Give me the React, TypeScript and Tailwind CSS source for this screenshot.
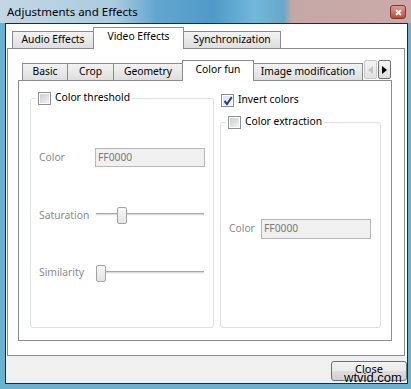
import React from 'react';

const CheckBox = ({ checked }: { checked?: boolean }) => (
  <span className="relative flex h-[13px] w-[13px] shrink-0 items-center justify-center border border-[#8e8f8f] bg-white">
    <span
      className={
        checked
          ? 'h-[9px] w-[9px] bg-gradient-to-br from-[#d4e4f4] to-[#f6f9fc]'
          : 'h-[9px] w-[9px] bg-gradient-to-br from-[#c9cdd2] to-[#f4f4f4]'
      }
    />
    {checked && (
      <svg className="absolute left-[1px] top-[1px]" width="10" height="10" viewBox="0 0 10 10">
        <path d="M1.5 5 L4 8 L8.8 1.2" fill="none" stroke="#263f8f" strokeWidth="2" />
      </svg>
    )}
  </span>
);

const Tab = ({ label, w, selected, small }: { label: string; w: string; selected?: boolean; small?: boolean }) => (
  <div
    className={
      selected
        ? `relative z-10 -ml-px mb-[-1px] flex items-center justify-center border border-b-0 border-[#898c95] bg-white ${small ? 'h-[21px]' : 'h-[22px]'} ${w}`
        : `-ml-px flex h-[17px] items-center justify-center border border-b-0 border-[#898c95] bg-gradient-to-b from-[#f3f3f3] to-[#dedede] ${w}`
    }
  >
    <span className={selected ? 'pb-[3px]' : ''}>{label}</span>
  </div>
);

const TextBox = ({ h }: { h: string }) => (
  <div className={`flex w-[110px] items-center border border-[#b8b8b8] bg-[#f0f0f0] pl-[2px] text-[#7a7a7a] ${h}`}>
    FF0000
  </div>
);

const Slider = ({ pos }: { pos: number }) => (
  <div className="relative h-[17px] w-[108px]">
    <div className="absolute left-0 right-0 top-[6px] h-[3px] border-t border-[#a8a8a8] border-b border-b-[#f4f4f4] bg-[#dcdcdc]" />
    <div
      className="absolute top-0 h-[17px] w-[10px] rounded-[2px] border border-[#a3a3a3] bg-gradient-to-b from-[#f7f7f7] to-[#e3e3e3]"
      style={{ left: pos }}
    />
  </div>
);

export default function App() {
  return (
    <div className="flex h-[389px] w-[411px] flex-col overflow-hidden bg-[#6ab2cf] font-['Noto_Sans',sans-serif] text-[10.3px] text-black">
      {/* title bar */}
      <div className="flex h-[23px] shrink-0 items-center bg-[linear-gradient(90deg,#c3d7e3_0%,#aacbdf_28%,#62a6d0_38%,#4f9ac8_52%,#72b8db_62%,#68a7c8_69%,#c5a7a6_71%,#caabaa_100%)] pl-[7px] pr-[5px]">
        <span className="text-[11.5px] leading-none">Adjustments and Effects</span>
        <div className="ml-auto mt-[1px] flex h-[14px] w-[16px] items-center justify-center rounded-[3px] border border-[#7a3a34] bg-gradient-to-b from-[#e39a8e] to-[#c2463a]">
          <svg width="7" height="7" viewBox="0 0 7 7">
            <path d="M1 1 L6 6 M6 1 L1 6" stroke="white" strokeWidth="1.8" />
          </svg>
        </div>
      </div>

      {/* window body */}
      <div className="ml-[5px] flex h-[361px] w-[403px] flex-col border border-[#1f2c35] bg-[#f0f0f0]">
        <div className="flex h-[332px] flex-col bg-white">
          {/* outer tabs */}
          <div className="flex h-[24px] items-end pl-[7px]">
            <Tab label="Audio Effects" w="w-[82px]" />
            <Tab label="Video Effects" w="w-[91px]" selected />
            <Tab label="Synchronization" w="w-[98px]" />
          </div>
          <div className="ml-px mr-[2px] flex h-[308px] flex-col border border-[#898c95] bg-white">
            <div className="ml-[10px] flex w-[374px] flex-col">
              {/* inner tabs */}
              <div className="flex h-[31px] items-end pl-[5px]">
                <Tab label="Basic" w="w-[46px]" />
                <Tab label="Crop" w="w-[47px]" />
                <Tab label="Geometry" w="w-[70px]" />
                <Tab label="Color fun" w="w-[72px]" selected small />
                <Tab label="Image modification" w="w-[110px]" />
                <div className="mb-[1px] ml-auto mr-[1px] flex gap-[1px]">
                  <div className="flex h-[19px] w-[13px] items-center justify-center rounded-[2px] border border-[#c8c8c8] bg-gradient-to-b from-[#f4f4f4] to-[#e2e2e2]">
                    <svg width="5" height="8" viewBox="0 0 5 8">
                      <path d="M5 0 L0 4 L5 8 Z" fill="#c4c4c4" />
                    </svg>
                  </div>
                  <div className="flex h-[19px] w-[13px] items-center justify-center rounded-[2px] border border-[#707070] bg-gradient-to-b from-[#f6f6f6] to-[#dddddd]">
                    <svg width="5" height="8" viewBox="0 0 5 8">
                      <path d="M0 0 L5 4 L0 8 Z" fill="#000" />
                    </svg>
                  </div>
                </div>
              </div>

              {/* inner panel */}
              <div className="flex h-[261px] border border-[#898c95] bg-white pl-[11px] pr-[10px] pt-[10px]">
                {/* Color threshold */}
                <fieldset className="h-[237px] w-[184px] rounded-[3px] border border-[#dcdfe3] px-[5px]">
                  <legend className="flex h-[14px] items-center gap-[4px] px-[2px]">
                    <CheckBox />
                    <span>Color threshold</span>
                  </legend>
                  <div className="flex flex-col pl-[3px] text-[#8a8a8a]">
                    <div className="mt-[43px] flex h-[19px] items-center">
                      <span className="w-[56px]">Color</span>
                      <TextBox h="h-[19px]" />
                    </div>
                    <div className="mt-[40px] flex h-[17px] items-center">
                      <span className="w-[57px]">Saturation</span>
                      <Slider pos={21} />
                    </div>
                    <div className="mt-[40px] flex h-[18px] items-center">
                      <span className="w-[57px]">Similarity</span>
                      <Slider pos={0} />
                    </div>
                  </div>
                </fieldset>

                <div className="ml-[6px] flex w-[161px] flex-col">
                  <div className="ml-px mt-[2px] flex h-[14px] items-center gap-[4px]">
                    <CheckBox checked />
                    <span>Invert colors</span>
                  </div>
                  {/* Color extraction */}
                  <fieldset className="mt-[8px] h-[213px] rounded-[3px] border border-[#dcdfe3] px-[5px]">
                    <legend className="flex h-[14px] items-center gap-[4px] px-[2px]">
                      <CheckBox />
                      <span>Color extraction</span>
                    </legend>
                    <div className="mt-[90px] flex h-[20px] items-center pl-[3px] text-[#8a8a8a]">
                      <span className="w-[32px]">Color</span>
                      <TextBox h="h-[20px]" />
                    </div>
                  </fieldset>
                </div>
              </div>
            </div>
          </div>
        </div>

        {/* button bar */}
        <div className="flex flex-1 items-start justify-end pt-[5px]">
          <div className="relative flex h-[20px] w-[76px] items-center justify-center rounded-[3px] border border-[#707070] bg-[linear-gradient(180deg,#f2f2f2_0%,#ebebeb_50%,#dddddd_51%,#cfcfcf_100%)]">
            <span className="pb-[4px] text-[11px]">Close</span>
            <span className="absolute left-[12px] top-[9px] font-['Liberation_Sans',sans-serif] text-[13px] leading-none text-black [text-shadow:0_0_2px_white]">
              wtvid.com
            </span>
          </div>
        </div>
      </div>
    </div>
  );
}
